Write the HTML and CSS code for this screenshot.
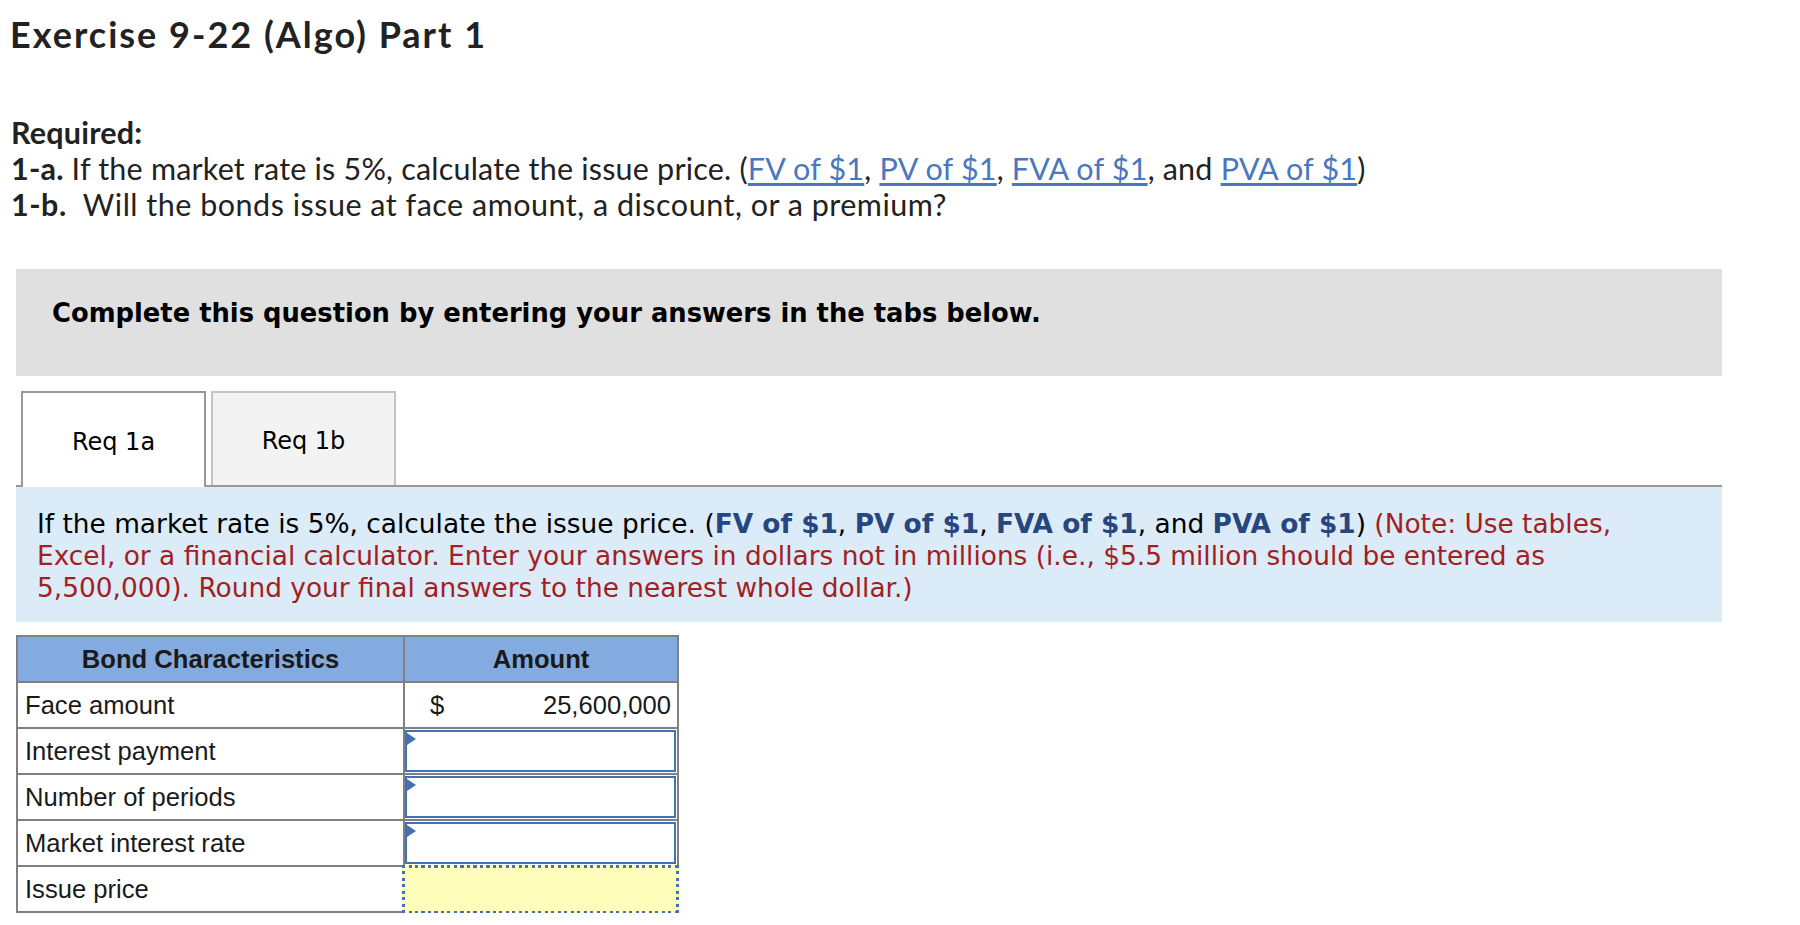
FILE: index.html
```html
<!DOCTYPE html>
<html lang="en">
<head>
  <meta charset="UTF-8">
  <title>Exercise 9-22 (Algo) Part 1</title>
  <link rel="stylesheet" href="styles.css">
</head>
<body>

  <h1 class="title">Exercise 9-22 (Algo) Part 1</h1>

  <div class="required">
    <div class="req-head">Required:</div>
    <div><b>1-a.</b> If the market rate is 5%, calculate the issue price. (<a href="#">FV of $1</a>, <a href="#">PV of $1</a>, <a href="#">FVA of $1</a>, and <a href="#">PVA of $1</a>)</div>
    <div class="wide"><b>1-b.</b>&nbsp; Will the bonds issue at face amount, a discount, or a premium?</div>
  </div>

  <div class="widget">
    <div class="instructions">Complete this question by entering your answers in the tabs below.</div>

    <div class="tabs">
      <div class="tab active">Req 1a</div>
      <div class="tab">Req 1b</div>
    </div>

    <div class="panel">
      <p class="prompt">If the market rate is 5%, calculate the issue price. (<b class="lnk">FV of $1</b>, <b class="lnk">PV of $1</b>, <b class="lnk">FVA of $1</b>, and <b class="lnk">PVA of $1</b>) <span class="note">(Note: Use tables,<br>Excel, or a financial calculator. Enter your answers in dollars not in millions (i.e., $5.5 million should be entered as<br>5,500,000). Round your final answers to the nearest whole dollar.)</span></p>
    </div>

    <table class="bond-table">
      <tr>
        <th class="col-label">Bond Characteristics</th>
        <th class="col-amount">Amount</th>
      </tr>
      <tr>
        <td>Face amount</td>
        <td class="given"><span class="cur">$</span><span>25,600,000</span></td>
      </tr>
      <tr>
        <td>Interest payment</td>
        <td class="entry"><div class="input-box"></div></td>
      </tr>
      <tr>
        <td>Number of periods</td>
        <td class="entry"><div class="input-box"></div></td>
      </tr>
      <tr>
        <td>Market interest rate</td>
        <td class="entry"><div class="input-box"></div></td>
      </tr>
      <tr>
        <td>Issue price</td>
        <td class="entry"><div class="calc-box"></div></td>
      </tr>
    </table>
  </div>

</body>
</html>
```

FILE: styles.css
```css
body {
  margin: 0;
  padding: 0 0 0 11px;
  font-family: Lato, "Open Sans", sans-serif;
  color: #222;
  background: white;
}
.title {
  margin: 13px 0 0 -1px;
  font-size: 36px;
  line-height: 1.2;
  letter-spacing: 2px;
  font-weight: bold;
}
.required {
  margin-top: 58px;
  font-size: 30.5px;
  line-height: 36px;
  letter-spacing: 0.2px;
}
.required .wide {
  letter-spacing: 0.5px;
}
.req-head,
.required b {
  font-weight: bold;
}
.required a {
  color: #4a77be;
  text-decoration: underline;
  text-underline-offset: 3px;
}
.widget {
  margin: 47px 0 0 5px;
  width: 1706px;
  font-family: "DejaVu Sans", Verdana, sans-serif;
  color: #000;
}
.instructions {
  background: #e0e0e0;
  padding: 29px 36px 48px;
  font-size: 25.8px;
  line-height: 30px;
  font-weight: bold;
}
.tabs {
  display: flex;
  gap: 5px;
  margin-top: 15px;
  padding-left: 5px;
  border-bottom: 2px solid #999;
}
.tab {
  box-sizing: border-box;
  width: 185px;
  height: 94px;
  padding-top: 3px;
  border: 2px solid #c4c4c4;
  border-bottom: none;
  background: #f3f3f3;
  font-size: 24px;
  display: flex;
  align-items: center;
  justify-content: center;
}
.tab.active {
  height: 96px;
  margin-bottom: -2px;
  border-color: #999;
  background: white;
}
.panel {
  background: #dcebf8;
  padding: 21px 21px 18px;
}
.prompt {
  margin: 0;
  font-size: 26.4px;
  line-height: 32px;
}
.lnk {
  color: #27467f;
}
.note {
  color: #a3201f;
}
.bond-table {
  margin-top: 13px;
  border-collapse: collapse;
  width: 663px;
  font-family: "Liberation Sans", Arial, sans-serif;
  font-size: 25.6px;
  color: #1a1a1a;
}
.bond-table th,
.bond-table td {
  border: 2px solid #808080;
  height: 44px;
  padding: 0 7px;
  text-align: left;
}
.bond-table th {
  background: #84abe0;
  text-align: center;
  font-weight: bold;
}
.col-label {
  width: 371px;
}
.bond-table td.given {
  padding: 0 6px 0 25px;
}
.given .cur {
  float: left;
}
.given span:last-child {
  float: right;
}
.bond-table td.entry {
  padding: 0;
}
.input-box {
  position: relative;
  box-sizing: border-box;
  height: 42px;
  margin: 1px 1px 1px 0;
  border: 2px solid #4470b8;
  background: white;
}
.input-box::before {
  content: "";
  position: absolute;
  left: 0;
  top: 1px;
  border-left: 9px solid #4470b8;
  border-top: 6px solid transparent;
  border-bottom: 6px solid transparent;
}
/* square dots, like the dotted frame of the calculated cell */
.calc-box {
  position: relative;
  z-index: 1;
  box-sizing: border-box;
  height: 49px;
  margin: -2px -2px -3px -3px;
  background:
    repeating-linear-gradient(90deg, #4470b8 0 3px, transparent 3px 6.5px) top / 100% 3px no-repeat,
    repeating-linear-gradient(90deg, #4470b8 0 3px, transparent 3px 6.5px) bottom / 100% 3px no-repeat,
    repeating-linear-gradient(180deg, #4470b8 0 3px, transparent 3px 6.5px) left / 3px 100% no-repeat,
    repeating-linear-gradient(180deg, #4470b8 0 3px, transparent 3px 6.5px) right / 3px 100% no-repeat,
    #ffffbb;
}
```
